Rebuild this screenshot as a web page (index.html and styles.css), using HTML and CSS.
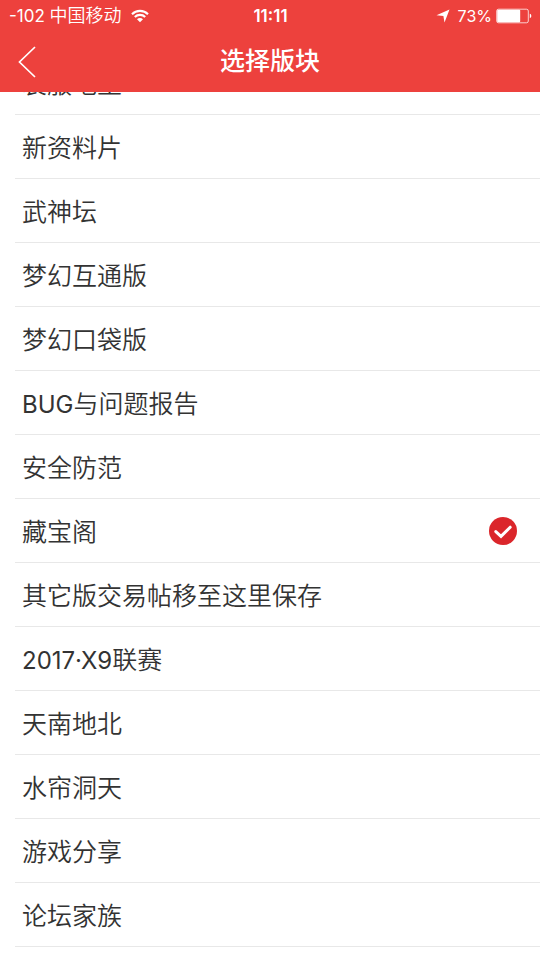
FILE: index.html
```html
<!DOCTYPE html>
<html lang="zh-CN">
<head>
<meta charset="utf-8">
<meta name="viewport" content="width=device-width, initial-scale=1">
<title>选择版块</title>
<link rel="stylesheet" href="styles.css">
</head>
<body>
<header class="header">
  <div class="status">
    <div class="carrier">
      <span>-102 <span class="operator">中国移动</span></span>
      <svg class="wifi" viewBox="0 0 18 14" width="18" height="14" aria-hidden="true">
        <path d="M1 5.2a11.3 11.3 0 0 1 16 0M3.8 8.1a7.3 7.3 0 0 1 10.4 0" fill="none" stroke="currentColor" stroke-width="2.1"/>
        <path d="M6 10.2a4.2 4.2 0 0 1 6 0l-3 3z" fill="currentColor"/>
      </svg>
    </div>
    <time class="clock">11:11</time>
    <div class="power">
      <svg viewBox="0 0 14 14" width="14" height="14" aria-hidden="true"><path d="M13.500 .5 8.500 13.500 7.400 7 .5 6.200z" fill="currentColor"/></svg>
      <span class="percent">73%</span>
      <svg viewBox="0 0 36 16" width="36" height="16" aria-hidden="true">
        <rect x=".7" y="1.200" width="31.600" height="13.600" rx="1.800" fill="none" stroke="currentColor" stroke-width="1" opacity=".75"/>
        <rect x="1.200" y="1.700" width="23" height="12.600" rx="1" fill="currentColor"/>
        <path d="M33.800 5.800c2 .6 2 3.800 0 4.400z" fill="currentColor"/>
      </svg>
    </div>
  </div>
  <nav class="navbar">
    <button class="back" type="button" aria-label="返回">
      <svg viewBox="0 0 18 32" width="18" height="32" aria-hidden="true"><path d="M17 1 1.500 16 17 31" fill="none" stroke="currentColor" stroke-width="1.700"/></svg>
    </button>
    <h1 class="title">选择版块</h1>
  </nav>
</header>
<main class="boards">
  <form class="list">
    <label class="row"><span class="name">装服地里</span><input type="radio" name="board"></label>
    <label class="row"><span class="name">新资料片</span><input type="radio" name="board"></label>
    <label class="row"><span class="name">武神坛</span><input type="radio" name="board"></label>
    <label class="row"><span class="name">梦幻互通版</span><input type="radio" name="board"></label>
    <label class="row"><span class="name">梦幻口袋版</span><input type="radio" name="board"></label>
    <label class="row"><span class="name"><span class="latin">BUG</span>与问题报告</span><input type="radio" name="board"></label>
    <label class="row"><span class="name">安全防范</span><input type="radio" name="board"></label>
    <label class="row"><span class="name">藏宝阁</span><input type="radio" name="board" checked>
      <svg class="tick" viewBox="0 0 28 28" width="28" height="28" aria-hidden="true"><circle cx="14" cy="14" r="14" fill="#db262b"/><path d="M6.800 14.600 12 19.400 21.200 10.200" fill="none" stroke="#fff" stroke-width="3" stroke-linecap="round" stroke-linejoin="miter"/></svg>
    </label>
    <label class="row"><span class="name">其它版交易帖移至这里保存</span><input type="radio" name="board"></label>
    <label class="row"><span class="name"><span class="latin">2017·X9</span>联赛</span><input type="radio" name="board"></label>
    <label class="row"><span class="name">天南地北</span><input type="radio" name="board"></label>
    <label class="row"><span class="name">水帘洞天</span><input type="radio" name="board"></label>
    <label class="row"><span class="name">游戏分享</span><input type="radio" name="board"></label>
    <label class="row"><span class="name">论坛家族</span><input type="radio" name="board"></label>
  </form>
</main>
</body>
</html>
```
FILE: styles.css
```css
* {
  box-sizing: border-box;
}

body {
  margin: 0;
  height: 100vh;
  display: flex;
  flex-direction: column;
  background: #fff;
  color: #333;
  font-family: Inter, "Noto Sans CJK SC", sans-serif;
}

.header {
  flex: none;
  background: #ed413d;
  color: #fff;
}

.status {
  display: grid;
  grid-template-columns: 1fr auto 1fr;
  align-items: center;
  height: 31px;
  padding: 1px 8px 0 9px;
  font-size: 17px;
  line-height: 30px;
}

.carrier,
.power {
  display: flex;
  align-items: center;
}

.carrier {
  gap: 9px;
}

.operator {
  font-size: 18px;
  font-weight: 350;
}

.power {
  justify-content: flex-end;
  gap: 4px;
}

.percent {
  margin-left: 4px;
  font-size: 16px;
}

.clock {
  font-size: 17px;
  font-weight: 600;
}

.navbar {
  display: grid;
  grid-template-columns: 60px 1fr 60px;
  align-items: center;
  height: 61px;
}

.back {
  display: flex;
  align-items: center;
  height: 60px;
  padding: 0 0 0 18px;
  border: 0;
  background: none;
  color: inherit;
}

.title {
  margin: 0;
  font-size: 25px;
  font-weight: 500;
  line-height: 61px;
  text-align: center;
}

.boards {
  flex: 1;
  min-height: 0;
  overflow: hidden;
}

/* The list is scrolled part of a row under the header. */
.list {
  margin: -41px 0 0 15px;
}

.row {
  position: relative;
  display: flex;
  align-items: center;
  justify-content: space-between;
  height: 64px;
  padding: 0 23px 0 7px;
  border-bottom: 1px solid #e8e8e8;
  font-size: 25px;
  font-weight: 350;
}

.name {
  padding-bottom: 2px;
}

.latin {
  font-size: 24px;
  font-weight: 400;
}

.row input {
  position: absolute;
  opacity: 0;
}
```
